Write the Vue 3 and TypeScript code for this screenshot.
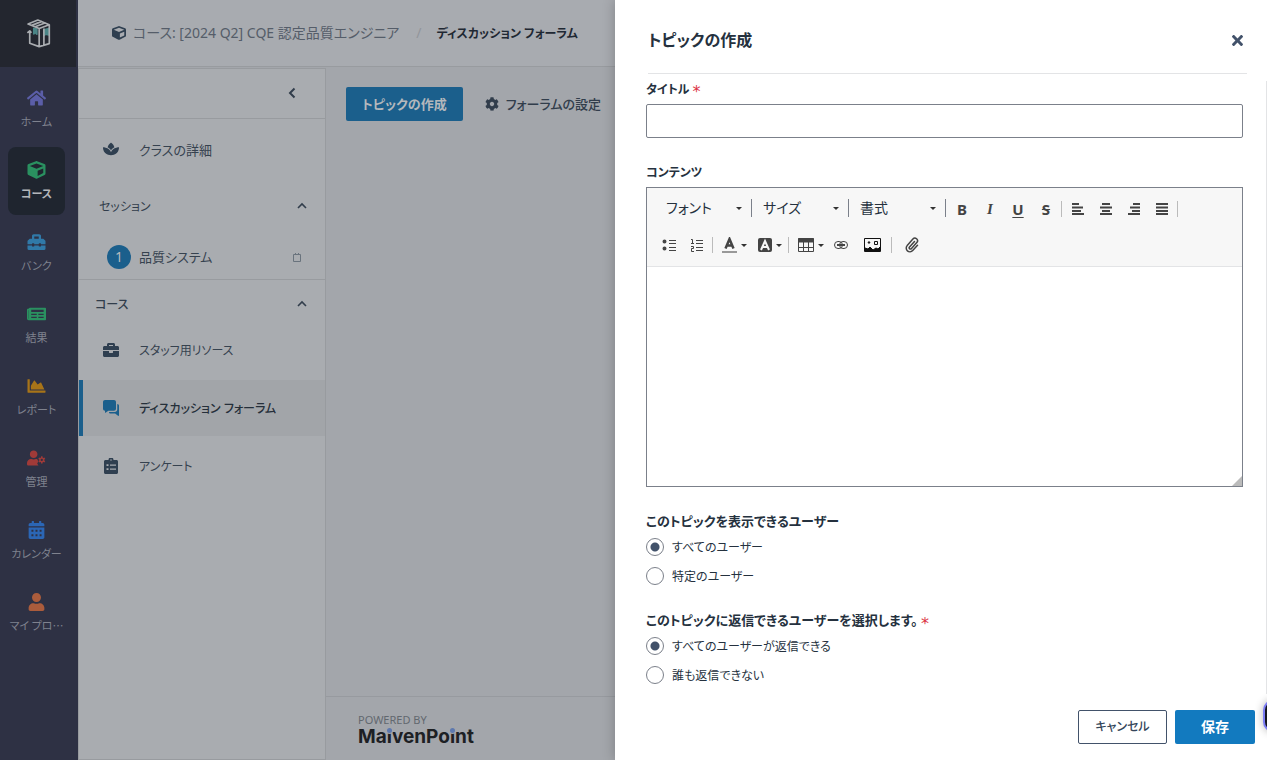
<script setup lang="ts">
import { ref } from 'vue'

interface Glyph {
  box: string
  d: string
}

interface RailItem {
  label: string
  icon: string
  tone: string
  active?: boolean
}

const glyphs: Record<string, Glyph> = {
  home: {
    box: '0 0 576 512',
    d: 'M280.37 148.26L96 300.11V464a16 16 0 0 0 16 16l112.06-.29a16 16 0 0 0 15.92-16V368a16 16 0 0 1 16-16h64a16 16 0 0 1 16 16v95.64a16 16 0 0 0 16 16.05L464 480a16 16 0 0 0 16-16V300L295.67 148.26a12.19 12.19 0 0 0-15.3 0zM571.6 251.47L488 182.56V44.05a12 12 0 0 0-12-12h-56a12 12 0 0 0-12 12v72.61L318.47 43a48 48 0 0 0-61 0L4.34 251.47a12 12 0 0 0-1.6 16.9l25.5 31A12 12 0 0 0 45.15 301l235.22-193.74a12.19 12.19 0 0 1 15.3 0L530.9 301a12 12 0 0 0 16.9-1.6l25.5-31a12 12 0 0 0-1.7-16.93z',
  },
  cube: {
    box: '0 0 512 512',
    d: 'M239.1 6.3l-208 78c-18.7 7-31.1 25-31.1 45v225.1c0 18.2 10.3 34.8 26.5 42.9l208 104c13.5 6.8 29.4 6.8 42.9 0l208-104c16.3-8.1 26.5-24.8 26.5-42.9V129.3c0-20-12.4-37.9-31.1-44.9l-208-78C262 2.2 250 2.2 239.1 6.3zM256 68.4l192 72v1.1l-192 78-192-78v-1.1l192-72zm32 356V275.5l160-65v133.9l-160 80z',
  },
  toolbox: {
    box: '0 0 512 512',
    d: 'M502.63 214.63l-45.25-45.25c-6-6-14.14-9.37-22.63-9.37H384V80c0-26.51-21.49-48-48-48H176c-26.51 0-48 21.49-48 48v80H77.25c-8.49 0-16.62 3.37-22.63 9.37L9.37 214.63c-6 6-9.37 14.14-9.37 22.63V320h128v-16c0-8.84 7.16-16 16-16h32c8.84 0 16 7.16 16 16v16h128v-16c0-8.84 7.16-16 16-16h32c8.84 0 16 7.16 16 16v16h128v-82.75c0-8.48-3.37-16.62-9.37-22.62zM320 160H192V96h128v64zm64 208c0 8.84-7.16 16-16 16h-32c-8.84 0-16-7.16-16-16v-16H192v16c0 8.84-7.16 16-16 16h-32c-8.84 0-16-7.16-16-16v-16H0v96c0 17.67 14.33 32 32 32h448c17.67 0 32-14.33 32-32v-96H384v16z',
  },
  news: {
    box: '0 0 576 512',
    d: 'M552 64H88c-13 0-24 8-28 20-8 12-14 16-36 16-13 0-24 11-24 24v272c0 29 23 52 52 52h500c13 0 24-11 24-24V88c0-13-11-24-24-24zM48 400V144h8v252c0 8-8 8-8 4zM296 376H128v-40h168v40zm208 0H344v-40h160v40zM296 288H128v-40h168v40zm208 0H344v-40h160v40zm0-96H128v-64h376v64z',
  },
  chart: {
    box: '0 0 512 512',
    d: 'M500 384c6.6 0 12 5.4 12 12v40c0 6.6-5.4 12-12 12H12c-6.6 0-12-5.4-12-12V76c0-6.6 5.4-12 12-12h40c6.6 0 12 5.4 12 12v308h436zM372.7 159.5L288 216l-85.3-113.7c-5.1-6.8-15.5-6.3-19.9 1L96 248v104h384l-89.9-187.8c-3.2-6.5-11.4-8.7-17.4-4.7z',
  },
  admin: {
    box: '0 0 640 512',
    d: 'M224 256c70.7 0 128-57.3 128-128S294.7 0 224 0 96 57.3 96 128s57.3 128 128 128zM134 288C60 288 0 348 0 422v42c0 26 21 48 48 48h342c-10-8-30-40-42-62-8-16 0-34 24-48-4-20-4-44 0-64-20-10-28-26-20-44-10-4-24-6-38-6h-17c-45 21-101 21-146 0zM470 204c18-5 38-5 56 0v38l26 15 33-19c14 14 24 31 30 50l-33 19v30l33 19c-6 19-16 36-30 50l-33-19-26 15v38c-18 5-38 5-56 0v-38l-26-15-33 19c-14-14-24-31-30-50l33-19v-30l-33-19c6-19 16-36 30-50l33 19 26-15zM498 284a38 38 0 1 0 0 76 38 38 0 0 0 0-76z',
  },
  calendar: {
    box: '0 0 448 512',
    d: 'M0 464c0 26.5 21.5 48 48 48h352c26.5 0 48-21.5 48-48V184H0v280zM312 248h56v56h-56zM312 376h56v56h-56zM196 248h56v56h-56zM196 376h56v56h-56zM80 248h56v56H80zM80 376h56v56H80zM400 56h-40V16c0-9-7-16-16-16h-32c-9 0-16 7-16 16v40H152V16c0-9-7-16-16-16h-32c-9 0-16 7-16 16v40H48C21 56 0 78 0 104v48h448v-48c0-26-21-48-48-48z',
  },
  user: {
    box: '0 0 448 512',
    d: 'M224 256c70.7 0 128-57.3 128-128S294.7 0 224 0 96 57.3 96 128s57.3 128 128 128zm89.6 32h-16.7c-22.2 10.2-46.9 16-72.9 16s-50.6-5.8-72.9-16h-16.7C60.2 288 0 348.2 0 422.4V464c0 26.5 21.5 48 48 48h352c26.5 0 48-21.5 48-48v-41.6c0-74.2-60.2-134.4-134.4-134.4z',
  },
  cog: {
    box: '0 0 512 512',
    d: 'M487.4 315.7l-42.6-24.6c4.3-23.2 4.3-47 0-70.2l42.6-24.6c4.9-2.8 7.1-8.6 5.5-14-11.1-35.6-30-67.8-54.7-94.6-3.8-4.1-10-5.1-14.8-2.3L380.8 110c-17.9-15.4-38.5-27.3-60.8-35.1V25.8c0-5.6-3.9-10.5-9.4-11.7-36.7-8.2-74.3-7.8-109.2 0-5.5 1.2-9.4 6.1-9.4 11.7V75c-22.2 7.9-42.8 19.8-60.8 35.1L88.7 85.5c-4.9-2.8-11-1.9-14.8 2.3-24.7 26.7-43.6 58.9-54.7 94.6-1.7 5.4.6 11.2 5.5 14L67.3 221c-4.3 23.2-4.3 47 0 70.2l-42.6 24.6c-4.9 2.8-7.1 8.6-5.5 14 11.1 35.6 30 67.8 54.7 94.6 3.8 4.1 10 5.1 14.8 2.3l42.6-24.6c17.9 15.4 38.5 27.3 60.8 35.1v49.2c0 5.6 3.9 10.5 9.4 11.7 36.7 8.2 74.3 7.8 109.2 0 5.5-1.2 9.4-6.1 9.4-11.7v-49.2c22.2-7.9 42.8-19.8 60.8-35.1l42.6 24.6c4.9 2.8 11 1.9 14.8-2.3 24.7-26.7 43.6-58.9 54.7-94.6 1.5-5.5-.7-11.3-5.6-14.1zM256 336c-44.1 0-80-35.9-80-80s35.9-80 80-80 80 35.9 80 80-35.9 80-80 80z',
  },
  spa: {
    box: '0 0 576 512',
    d: 'M568 192c-29 1-136 9-214 83-33 32-54 67-66 95-12-28-33-63-66-95C144 201 37 193 8 192c-4 0-8 4-8 8 0 28 6 131 78 203 62 62 145 77 210 77s148-15 210-77c72-72 78-175 78-203 0-4-4-8-8-8zM288 303c13-19 27-36 45-52 23-23 50-40 77-54-16-64-53-116-114-163-5-3-11-3-15 0-61 47-99 99-115 163 27 14 54 31 77 53 18 17 32 34 45 53z',
  },
  briefcase: {
    box: '0 0 512 512',
    d: 'M320 336c0 8.84-7.16 16-16 16h-96c-8.84 0-16-7.16-16-16v-48H0v144c0 25.6 22.4 48 48 48h416c25.6 0 48-22.4 48-48V288H320v48zm144-208h-80V80c0-25.6-22.4-48-48-48H176c-25.6 0-48 22.4-48 48v48H48c-25.6 0-48 22.4-48 48v80h512v-80c0-25.6-22.4-48-48-48zm-144 0H192V96h128v32z',
  },
  comments: {
    box: '0 0 512 512',
    d: 'M416 276V64c0-35-29-64-64-64H64C29 0 0 29 0 64v212c0 35 29 64 64 64v60c0 8 9 13 16 8l92-68h180c35 0 64-29 64-64zM456 130v170c0 44-36 80-80 80H192c0 32 20 52 52 52h144l92 72c14 10 32 4 32-8V186c0-32-22-56-56-56z',
  },
  clipboard: {
    box: '0 0 448 512',
    d: 'M400 64h-96a80 80 0 0 0-160 0H48C21 64 0 85 0 112v352c0 27 21 48 48 48h352c27 0 48-21 48-48V112c0-27-21-48-48-48zM224 40a24 24 0 1 1 0 48 24 24 0 0 1 0-48zM80 200h64v56H80zM192 208h192v40H192zM80 328h64v56H80zM192 336h192v40H192z',
  },
  close: {
    box: '0 80 352 352',
    d: 'M242.72 256l100.07-100.07c12.28-12.28 12.28-32.19 0-44.48l-22.24-22.24c-12.28-12.28-32.19-12.28-44.48 0L176 189.28 75.93 89.21c-12.28-12.28-32.19-12.28-44.48 0L9.21 111.45c-12.28 12.28-12.28 32.19 0 44.48L109.28 256 9.21 356.07c-12.28 12.28-12.28 32.19 0 44.48l22.24 22.24c12.28 12.28 32.2 12.28 44.48 0L176 322.72l100.07 100.07c12.28 12.28 32.2 12.28 44.48 0l22.24-22.24c12.28-12.28 12.28-32.19 0-44.48L242.72 256z',
  },
}

const railItems: RailItem[] = [
  { label: 'ホーム', icon: 'home', tone: 'violet' },
  { label: 'コース', icon: 'cube', tone: 'green', active: true },
  { label: 'バンク', icon: 'toolbox', tone: 'sky' },
  { label: '結果', icon: 'news', tone: 'green' },
  { label: 'レポート', icon: 'chart', tone: 'amber' },
  { label: '管理', icon: 'admin', tone: 'red' },
  { label: 'カレンダー', icon: 'calendar', tone: 'blue' },
  { label: 'マイ プロ…', icon: 'user', tone: 'orange' },
]

const courseItems = [
  { label: 'スタッフ用リソース', icon: 'briefcase', active: false },
  { label: 'ディスカッション フォーラム', icon: 'comments', active: true },
  { label: 'アンケート', icon: 'clipboard', active: false },
]

const pickers = ['フォント', 'サイズ', '書式']

const aligns = [
  { name: '左揃え', d: 'M1 1h7M1 4.500h11M1 8h9M1 11h12' },
  { name: '中央揃え', d: 'M3 1h8M1 4.500h12M3 8h8M1 11h12' },
  { name: '右揃え', d: 'M6 1h7M3 4.500h10M5 8h8M1 11h12' },
  { name: '両端揃え', d: 'M1 1h12M1 4.500h12M1 8h12M1 11h12' },
]

const title = ref('')
const content = ref('')
const viewers = ref('all')
const repliers = ref('all')
</script>

<template>
  <div class="app">
    <nav class="rail">
      <a class="brand" href="#" aria-label="MaivenPoint">
        <svg viewBox="78 56 74 86" width="25" height="29" fill="none" stroke-width="5" stroke-linejoin="round">
          <path class="teal" d="M101 84v16l4-4 5 5V86z" />
          <path class="teal" d="M131 88v17l5-4 10 2V84z" />
          <path d="M84 71l29-12 34 14-30 11zM95 75l30-12M105 79l31-12M117 84v54l30-9V73M131 84v50M89 92v36l28 10M82 97l7-6 5 6" />
        </svg>
      </a>
      <ul class="rail-list">
        <li v-for="item in railItems" :key="item.label">
          <a href="#" class="rail-item" :class="{ active: item.active }">
            <svg :class="item.tone" :viewBox="glyphs[item.icon].box" width="19" height="18" fill="currentColor" fill-rule="evenodd">
              <path :d="glyphs[item.icon].d" />
            </svg>
            <span>{{ item.label }}</span>
          </a>
        </li>
      </ul>
    </nav>

    <div class="workspace">
      <header class="crumbs">
        <a href="#" class="crumb">
          <svg :viewBox="glyphs.cube.box" width="14" height="14" fill="currentColor" fill-rule="evenodd"><path :d="glyphs.cube.d" /></svg>
          コース: [2024 Q2] CQE 認定品質エンジニア
        </a>
        <span class="slash">/</span>
        <strong>ディスカッション フォーラム</strong>
      </header>

      <div class="columns">
        <aside class="panel">
          <div class="collapse">
            <button type="button" aria-label="メニューを閉じる">
              <svg viewBox="0 0 8 12" width="8" height="12" fill="none" stroke="currentColor" stroke-width="2"><path d="M6.500 1.500L2 6l4.500 4.500" /></svg>
            </button>
          </div>
          <a href="#" class="panel-row details">
            <svg :viewBox="glyphs.spa.box" width="16" height="16" fill="currentColor" fill-rule="evenodd"><path :d="glyphs.spa.d" /></svg>
            <span>クラスの詳細</span>
          </a>
          <button type="button" class="section sessions">
            <span>セッション</span>
            <svg viewBox="0 0 12 8" width="12" height="8" fill="none" stroke="currentColor" stroke-width="2"><path d="M2 6l4-4 4 4" /></svg>
          </button>
          <a href="#" class="session">
            <span class="num">1</span>
            <span class="session-name">品質システム</span>
            <svg viewBox="0 0 8 9" width="8" height="9" fill="none" stroke="currentColor"><path d="M.5 1.500h7v7h-7zM2.500 0v2M5.500 0v2" /></svg>
          </a>
          <button type="button" class="section course">
            <span>コース</span>
            <svg viewBox="0 0 12 8" width="12" height="8" fill="none" stroke="currentColor" stroke-width="2"><path d="M2 6l4-4 4 4" /></svg>
          </button>
          <a v-for="item in courseItems" :key="item.label" href="#" class="panel-row" :class="{ current: item.active }">
            <svg :viewBox="glyphs[item.icon].box" width="16" height="16" fill="currentColor" fill-rule="evenodd"><path :d="glyphs[item.icon].d" /></svg>
            <span>{{ item.label }}</span>
          </a>
        </aside>

        <main class="content">
          <div class="actions">
            <button type="button" class="create">トピックの作成</button>
            <button type="button" class="settings">
              <svg :viewBox="glyphs.cog.box" width="14" height="14" fill="currentColor" fill-rule="evenodd"><path :d="glyphs.cog.d" /></svg>
              フォーラムの設定
            </button>
          </div>
          <footer class="powered">
            <small>POWERED BY</small>
            <div class="wordmark">Ma<span class="dot">i</span>venPo<span class="dot">i</span>nt</div>
          </footer>
        </main>
      </div>
    </div>

    <section class="drawer" role="dialog" aria-labelledby="drawer-title">
      <header class="drawer-head">
        <h1 id="drawer-title">トピックの作成</h1>
        <button type="button" aria-label="閉じる">
          <svg :viewBox="glyphs.close.box" width="11" height="11" fill="currentColor"><path :d="glyphs.close.d" /></svg>
        </button>
      </header>

      <form id="topic" class="drawer-body" @submit.prevent>
        <label for="topic-title" class="caption">タイトル <b>*</b></label>
        <input id="topic-title" v-model="title" class="title-input" type="text" />

        <label for="topic-content" class="caption">コンテンツ</label>
        <div class="editor">
          <div class="toolbar">
            <div class="tools">
              <div v-for="name in pickers" :key="name" class="picker">
                <select :aria-label="name"><option>{{ name }}</option></select>
                <i class="caret"></i>
              </div>
              <button type="button" class="letter">B</button>
              <button type="button" class="letter italic">I</button>
              <button type="button" class="letter under">U</button>
              <button type="button" class="letter strike">S</button>
              <i class="bar"></i>
              <button v-for="a in aligns" :key="a.name" type="button" :aria-label="a.name">
                <svg viewBox="0 0 14 12" width="14" height="12" stroke="currentColor" stroke-width="2"><path :d="a.d" /></svg>
              </button>
              <i class="bar"></i>
            </div>
            <div class="tools">
              <button type="button" aria-label="箇条書き">
                <svg viewBox="0 0 14 12" width="14" height="12" stroke="currentColor" fill="currentColor">
                  <path stroke="none" d="M.5 2.500a2 2 0 1 1 4 0 2 2 0 0 1-4 0zM.5 9.500a2 2 0 1 1 4 0 2 2 0 0 1-4 0z" />
                  <path d="M7 1.500h7M7 4.500h7M7 8.500h7M7 11.500h7" />
                </svg>
              </button>
              <button type="button" aria-label="番号付きリスト">
                <svg viewBox="0 0 14 14" width="14" height="14" fill="none" stroke="currentColor">
                  <path d="M1 1.500h1.500V6M1 5.500h3M1 8.500h2.500v2h-2v3H4M6 2.500h7M6 5.500h7M6 9.500h7M6 12.500h7" />
                </svg>
              </button>
              <i class="bar"></i>
              <button type="button" class="wide" aria-label="文字の色">
                <svg viewBox="0 0 15 16" width="15" height="16" fill="none" stroke="currentColor">
                  <path stroke-width="2.500" d="M3.500 11.500l4-9.500 4 9.500M5 8.500h5" /><path class="grey" d="M0 15h15" />
                </svg>
                <i class="caret"></i>
              </button>
              <button type="button" class="wide" aria-label="背景色">
                <svg viewBox="0 0 14 14" width="14" height="14" fill="none">
                  <rect width="14" height="14" rx="2" fill="currentColor" /><path stroke="#f7f7f7" stroke-width="2" d="M3 12l4-9 4 9M4.500 9h5" />
                </svg>
                <i class="caret"></i>
              </button>
              <i class="bar"></i>
              <button type="button" class="wide" aria-label="表">
                <svg viewBox="0 0 16 14" width="16" height="14" fill="none" stroke="currentColor">
                  <path d="M.5 .5h15v13H.5zM.5 9.500h15M5.500 4v10M10.500 4v10" /><path stroke-width="4" d="M0 2.500h16" />
                </svg>
                <i class="caret"></i>
              </button>
              <button type="button" aria-label="リンク">
                <svg viewBox="0 0 14 8" width="14" height="8" fill="none" stroke="currentColor">
                  <rect x=".5" y=".5" width="8" height="7" rx="3.500" /><rect x="5.500" y=".5" width="8" height="7" rx="3.500" /><path stroke-width="2" d="M3 4h8" />
                </svg>
              </button>
              <button type="button" class="wide image" aria-label="画像">
                <svg viewBox="0 0 17 14" width="17" height="14" fill="none" stroke="#111">
                  <path d="M.5 .5h16v13H.5z" /><path fill="#111" d="M1 10l3 1 2-2 3 3 3-2 2 1 2-2v4H1z" /><circle cx="5" cy="4.500" r=".8" fill="#111" /><path d="M10.500 3.500h3v3h-3z" />
                </svg>
              </button>
              <i class="bar"></i>
              <button type="button" class="wide image" aria-label="ファイルを添付">
                <svg viewBox="0 0 14 16" width="14" height="16" fill="none" stroke="currentColor" stroke-width="1.500" stroke-linecap="round">
                  <path d="M9.500 4.500L4.500 10a1.200 1.200 0 0 0 1.800 1.700l5.500-6.200a2.600 2.600 0 0 0-3.900-3.500L2.200 8.600a3.700 3.700 0 0 0 5.500 5l4.800-5.300" />
                </svg>
              </button>
            </div>
          </div>
          <textarea id="topic-content" v-model="content"></textarea>
          <i class="grip"></i>
        </div>

        <fieldset>
          <legend class="caption">このトピックを表示できるユーザー</legend>
          <label class="choice"><input v-model="viewers" type="radio" name="viewers" value="all" /><span>すべてのユーザー</span></label>
          <label class="choice"><input v-model="viewers" type="radio" name="viewers" value="some" /><span>特定のユーザー</span></label>
        </fieldset>
        <fieldset>
          <legend class="caption">このトピックに返信できるユーザーを選択します。 <b>*</b></legend>
          <label class="choice"><input v-model="repliers" type="radio" name="repliers" value="all" /><span>すべてのユーザーが返信できる</span></label>
          <label class="choice"><input v-model="repliers" type="radio" name="repliers" value="none" /><span>誰も返信できない</span></label>
        </fieldset>
      </form>

      <footer class="drawer-foot">
        <button type="button" class="cancel">キャンセル</button>
        <button type="submit" form="topic" class="save">保存</button>
      </footer>
      <button type="button" class="assistant" aria-label="アシスタント"></button>
    </section>
  </div>
</template>

<style>
body {
  margin: 0;
}
</style>

<style scoped>
.app {
  display: flex;
  position: relative;
  min-height: 100vh;
  overflow: hidden;
  background: #a3a6ab;
  color: #313d4b;
  font: 14px/20px "Noto Sans", "Noto Sans CJK JP", sans-serif;
  font-feature-settings: "palt";
}
*,
*::before,
*::after {
  box-sizing: border-box;
}
a {
  color: inherit;
  text-decoration: none;
}
button,
select,
input,
textarea {
  margin: 0;
  padding: 0;
  border: 0;
  background: none;
  color: inherit;
  font: inherit;
  font-feature-settings: inherit;
}
svg {
  flex: none;
}
.rail {
  flex: none;
  width: 78px;
  background: #2e3144;
}
.brand {
  display: flex;
  align-items: center;
  justify-content: center;
  width: 76px;
  height: 67px;
  background: #23262f;
  stroke: #a9acb0;
}
.teal {
  fill: #4b8587;
  stroke: #4b8587;
}
.rail-list {
  display: grid;
  gap: 4px;
  margin: 0;
  padding: 8px 13px 0 8px;
  list-style: none;
}
.rail-item {
  display: flex;
  flex-direction: column;
  align-items: center;
  gap: 4px;
  height: 68px;
  padding-top: 14px;
  border-radius: 8px;
  color: #7f828e;
  font-family: "Noto Sans CJK JP", sans-serif;
  font-size: 11px;
  line-height: 20px;
  white-space: nowrap;
}
.rail-item.active {
  background: #1f252f;
  color: #b4b6ba;
  font-weight: 700;
}
.violet { color: #5b5ea8; }
.green { color: #2a9160; }
.sky { color: #3079a8; }
.amber { color: #a87418; }
.red { color: #a03a38; }
.blue { color: #2b66b5; }
.orange { color: #ab5c3c; }
.workspace {
  display: flex;
  flex: 1;
  flex-direction: column;
  min-width: 0;
}
.crumbs {
  display: flex;
  align-items: center;
  height: 67px;
  padding-left: 34px;
  border-bottom: 1px solid #989b9f;
  background: #a8abb0;
  white-space: nowrap;
}
.crumb {
  display: flex;
  align-items: center;
  gap: 7px;
  color: #555d69;
}
.crumb svg {
  color: #2f3f50;
}
.slash {
  margin: 0 15px 0 17px;
  color: #92959b;
}
.crumbs strong {
  padding-top: 2px;
  color: #1f2833;
  font-size: 12px;
}
.columns {
  display: flex;
  flex: 1;
}
.panel {
  flex: none;
  width: 248px;
  margin-top: 1px;
  border: 1px solid #989b9f;
  background: #a9acb0;
}
.collapse {
  display: flex;
  justify-content: flex-end;
  height: 50px;
  margin-bottom: 2px;
  padding-right: 29px;
  border-bottom: 1px solid #989b9f;
}
.panel-row {
  display: flex;
  align-items: center;
  gap: 20px;
  height: 56px;
  margin-bottom: 2px;
  padding-left: 20px;
  border-left: 4px solid transparent;
  color: #36424f;
  font-size: 12px;
}
.panel-row span,
.section span,
.choice span {
  padding-top: 2px;
}
.details,
.session {
  font-size: 13px;
}
.panel-row svg {
  color: #2f3f50;
}
.panel-row.current {
  border-color: #1b5f8c;
  background: #a2a5a9;
  color: #252f3a;
  font-weight: 500;
}
.panel-row.current svg {
  color: #1b5f8c;
}
.section {
  display: flex;
  align-items: center;
  justify-content: space-between;
  width: 100%;
  height: 53px;
  padding: 0 17px 0 20px;
  font-size: 12px;
}
.section svg {
  stroke-width: 1.6;
}
.course {
  height: 42px;
  padding: 6px 17px 0 16px;
  font-weight: 500;
}
.session {
  display: flex;
  align-items: center;
  height: 48px;
  padding: 3px 24px 0 28px;
  border-bottom: 1px solid #989b9f;
  color: #36424f;
}
.session svg {
  color: #69737d;
}
.num {
  width: 24px;
  height: 24px;
  margin-right: 8px;
  border-radius: 50%;
  background: #1b5f8c;
  color: #b8bbbe;
  font-size: 14px;
  line-height: 24px;
  text-align: center;
}
.session-name {
  flex: 1;
}
.content {
  display: flex;
  flex: 1;
  flex-direction: column;
  justify-content: space-between;
}
.actions {
  display: flex;
  gap: 22px;
  padding: 20px;
  font-size: 13px;
}
.create {
  height: 34px;
  padding: 0 16px;
  border-radius: 2px;
  background: #1b5f8c;
  color: #b4b8bc;
  font-weight: 700;
  white-space: nowrap;
}
.settings {
  display: flex;
  align-items: center;
  gap: 7px;
  font-weight: 500;
  white-space: nowrap;
}
.powered {
  height: 64px;
  padding: 16px 32px;
  border-top: 1px solid #979a9f;
}
.powered small {
  display: block;
  color: #62686f;
  font: 11px/14px "Noto Sans", sans-serif;
}
.wordmark {
  color: #1d2024;
  font: 700 19px/20px Inter, sans-serif;
}
.dot {
  display: inline-block;
  position: relative;
}
.dot::before {
  content: "";
  position: absolute;
  top: 1px;
  left: 0;
  width: 5px;
  height: 5px;
  border-radius: 50%;
  background: #5d78ae;
  box-shadow: 0 0 0 1px #a3a6ab;
}
.drawer {
  display: flex;
  flex-direction: column;
  position: absolute;
  top: 0;
  right: 0;
  bottom: 0;
  width: 652px;
  background: #fff;
  box-shadow: 0 0 12px rgba(0, 0, 0, 0.24);
  color: #25313e;
}
.drawer-head {
  display: flex;
  flex: none;
  align-items: center;
  justify-content: space-between;
  height: 74px;
  margin: 0 20px 0 33px;
  padding: 7px 4px 0 0;
  border-bottom: 1px solid #e3e4e6;
}
.drawer-head h1 {
  margin: 0;
  font-size: 16px;
  line-height: 24px;
}
.drawer-head button {
  display: flex;
  color: #42526a;
}
.drawer-body {
  flex: 1;
  margin-top: 7px;
  padding: 0 23px 0 31px;
  border-right: 1px solid #e3e4e6;
}
.caption {
  display: block;
  height: 16px;
  padding: 0;
  font-size: 12px;
  font-weight: 700;
  line-height: 18px;
}
legend.caption {
  height: 19px;
  font-size: 13px;
  line-height: 16px;
}
.caption b {
  color: #dc3545;
  font: 16px/16px "DejaVu Sans", sans-serif;
  vertical-align: sub;
}
.title-input {
  display: block;
  width: 100%;
  height: 34px;
  margin: 7px 0 26px;
  padding: 0 8px;
  border: 1px solid #7b808a;
  border-radius: 2px;
}
.editor {
  position: relative;
  height: 300px;
  margin: 7px 0 26px;
  border: 1px solid #7b808a;
}
.toolbar {
  padding: 3px 8px;
  border-bottom: 1px solid #e3e4e6;
  background: #f7f7f7;
  color: #444;
}
.tools {
  display: flex;
  align-items: center;
  height: 36px;
}
.tools button {
  display: flex;
  align-items: center;
  justify-content: center;
  width: 28px;
  height: 28px;
}
.tools .wide {
  justify-content: flex-start;
  gap: 4px;
  width: 36px;
  padding-left: 7px;
}
.tools .image {
  justify-content: center;
  width: 35px;
  padding: 0;
}
.picker {
  display: flex;
  align-items: center;
  width: 97px;
  height: 18px;
  margin-bottom: 2px;
  padding: 0 9px 0 11px;
  border-right: 1px solid #7b808a;
}
.picker + button {
  margin-left: 2px;
}
.picker select {
  flex: 1;
  min-width: 0;
  appearance: none;
  color: #25313e;
  line-height: 18px;
}
.caret {
  border: 3px solid transparent;
  border-top-color: #333;
  border-bottom: 0;
}
.bar {
  width: 1px;
  height: 16px;
  margin: 0 2px 0 1px;
  background: #bbb;
}
.letter {
  font: 700 15px/18px "Noto Sans", sans-serif;
}
.tools .italic {
  font-family: "Liberation Serif", serif;
  font-style: italic;
}
.under {
  text-decoration: underline;
  text-underline-offset: 2px;
}
.strike {
  text-decoration: line-through;
}
.grey {
  stroke: #999;
  stroke-width: 2;
}
textarea {
  display: block;
  width: 100%;
  height: 219px;
  padding: 8px;
  resize: none;
}
textarea,
input {
  outline: 0;
}
.grip {
  position: absolute;
  right: 0;
  bottom: 0;
  border: 5px solid #bbb;
  border-top-color: transparent;
  border-left-color: transparent;
}
fieldset {
  margin: 0 0 22px;
  padding: 0;
  border: 0;
}
fieldset:last-child {
  margin-bottom: 0;
}
.choice {
  display: flex;
  align-items: center;
  gap: 8px;
  height: 29px;
  font-size: 12px;
}
.choice input {
  width: 18px;
  height: 18px;
  border: 1px solid #7b808a;
  border-radius: 50%;
  appearance: none;
}
.choice input:checked {
  background: radial-gradient(circle, #42526a 4px, transparent 5px);
}
.drawer-foot {
  display: flex;
  flex: none;
  gap: 8px;
  justify-content: flex-end;
  padding: 16px 12px;
}
.drawer-foot button {
  height: 34px;
  border-radius: 2px;
}
.cancel {
  width: 89px;
  border: 1px solid #42526a;
  color: #34455a;
  font-size: 12px;
  font-weight: 500;
}
.drawer-foot .save {
  width: 80px;
  background: #127abf;
  color: #fff;
  font-weight: 700;
}
.assistant {
  position: absolute;
  right: -28px;
  bottom: 28px;
  width: 32px;
  height: 32px;
  border: 2px solid #7c7df5;
  border-radius: 10px;
  background: #14151f;
  box-shadow: 0 0 8px rgba(0, 0, 0, 0.3);
}
</style>
